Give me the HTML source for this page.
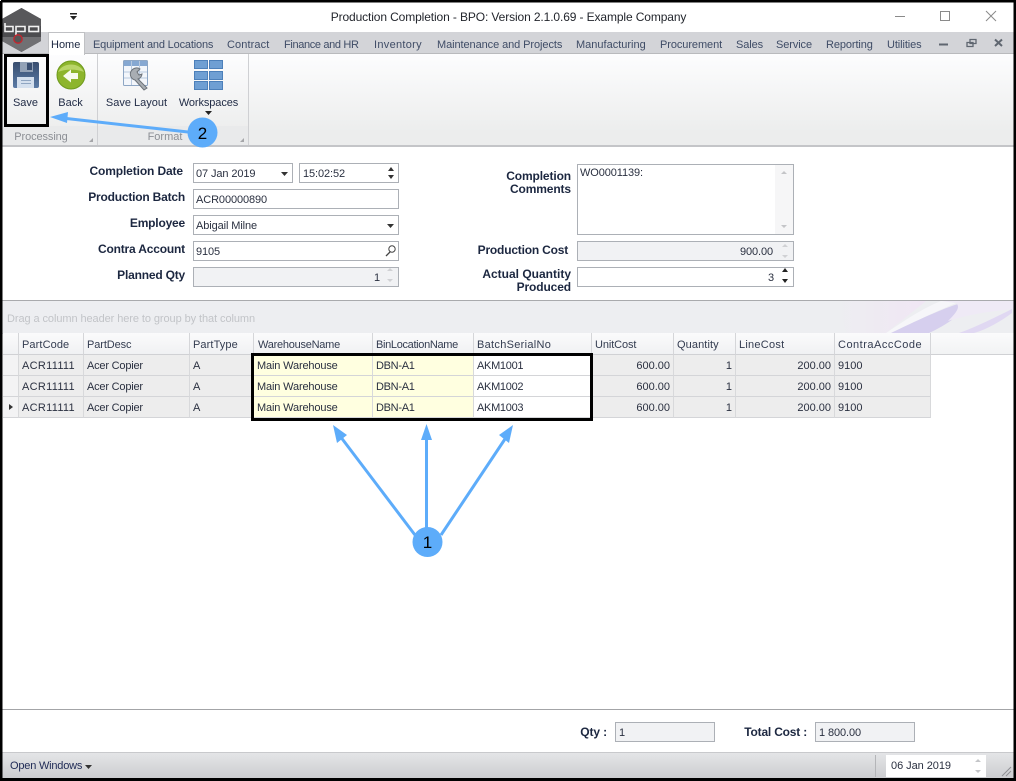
<!DOCTYPE html>
<html><head><meta charset="utf-8"><title>Production Completion</title>
<style>
html,body{margin:0;padding:0;background:#fff}
#p{position:relative;width:1016px;height:781px;overflow:hidden;background:#fff;font:11px/14px "Liberation Sans",sans-serif;color:#1f2a44}
#p div{position:absolute;box-sizing:border-box}
.t{white-space:nowrap}
.r{text-align:right}
.c{text-align:center}
.l{font-weight:bold;text-align:right;white-space:nowrap;color:#1c2740;font-size:12px;letter-spacing:-.12px}
.i{background:#fff;border:1px solid #acb0b6;white-space:nowrap;padding:3px 2px;color:#2a3040;line-height:14px;letter-spacing:-.1px}
.d{background:#f1f2f4}
.tb{top:38px;color:#3f4c66;white-space:nowrap}
.hc{top:333px;height:22px;background:linear-gradient(#fbfbfc,#f0f1f3);border-right:1px solid #d5d6d9;border-bottom:1px solid #d0d1d4;padding:5px 3px 0;color:#333c50;white-space:nowrap}
.cell{height:21px;background:#ededed;border-right:1px solid #d8d9db;border-bottom:1px solid #d4d5d8;padding:4px 3px 0;color:#2a3040;white-space:nowrap}
.y{background:#ffffe0}
.w{background:#fff}
.a{letter-spacing:.3px}.b{letter-spacing:-.2px}.m{letter-spacing:-.15px}.e{letter-spacing:-.3px}
.ind{background:#f3f3f4}
</style></head><body><div id="p">

<!-- ribbon tab strip -->
<div style="left:0;top:32px;width:1016px;height:22px;background:#d3d4d8"></div>
<div style="left:0;top:53px;width:1016px;height:1px;background:#b9babd"></div>
<!-- ribbon body -->
<div style="left:0;top:54px;width:1016px;height:92px;background:linear-gradient(#fdfdfe,#eceded 85%)"></div>
<div style="left:0;top:126px;width:249px;height:20px;background:#e9eaeb"></div>
<div style="left:0;top:145px;width:1016px;height:2px;background:#c4c5c8"></div>
<div style="left:97px;top:54px;width:1px;height:91px;background:#cfd0d3"></div>
<div style="left:248px;top:54px;width:1px;height:91px;background:#cfd0d3"></div>

<!-- Home tab -->
<div style="left:48px;top:32px;width:37px;height:23px;background:#fff;border:1px solid #c0c1c4;border-bottom:0"></div>
<div class="t" style="left:51px;top:38px;color:#1c2740">Home</div>
<div class="tb" style="left:93px;letter-spacing:-.17px">Equipment and Locations</div>
<div class="tb" style="left:227px;letter-spacing:.1px">Contract</div>
<div class="tb" style="left:284px;letter-spacing:-.35px">Finance and HR</div>
<div class="tb" style="left:374px;letter-spacing:.3px">Inventory</div>
<div class="tb" style="left:437px;letter-spacing:-.08px">Maintenance and Projects</div>
<div class="tb" style="left:576px">Manufacturing</div>
<div class="tb" style="left:660px;letter-spacing:-.08px">Procurement</div>
<div class="tb" style="left:736px;letter-spacing:-.1px">Sales</div>
<div class="tb" style="left:776px;letter-spacing:-.1px">Service</div>
<div class="tb" style="left:826px;letter-spacing:-.1px">Reporting</div>
<div class="tb" style="left:887px;letter-spacing:-.1px">Utilities</div>

<!-- title -->
<div class="t c" style="left:0;top:10px;width:1016px;font-size:12px;color:#23262d;letter-spacing:-.115px;padding-left:1px">Production Completion - BPO: Version 2.1.0.69 - Example Company</div>

<!-- ribbon labels -->
<div class="t c" style="left:5px;top:96px;width:41px;color:#1f2a44">Save</div>
<div class="t c" style="left:50px;top:96px;width:41px;color:#1f2a44">Back</div>
<div class="t c" style="left:100px;top:96px;width:73px;color:#1f2a44">Save Layout</div>
<div class="t c" style="left:173px;top:96px;width:71px;color:#1f2a44;letter-spacing:-.1px">Workspaces</div>
<div class="t c" style="left:5px;top:130px;width:72px;color:#8c8f95;letter-spacing:-.1px">Processing</div>
<div class="t c" style="left:130px;top:130px;width:70px;color:#8c8f95">Format</div>

<!-- form left -->
<div class="l" style="left:40px;width:143px;top:164px">Completion Date</div>
<div class="l" style="left:40px;width:145px;top:190px;letter-spacing:-.2px">Production Batch</div>
<div class="l" style="left:40px;width:145px;top:216px;letter-spacing:-.2px">Employee</div>
<div class="l" style="left:40px;width:145px;top:242px;letter-spacing:-.18px">Contra Account</div>
<div class="l" style="left:40px;width:145px;top:268px;letter-spacing:-.2px">Planned Qty</div>

<div class="i" style="left:193px;top:163px;width:100px;height:20px">07 Jan 2019</div>
<div class="i" style="left:299px;top:163px;width:100px;height:20px;padding-left:3px">15:02:52</div>
<div class="i" style="left:193px;top:189px;width:206px;height:20px">ACR00000890</div>
<div class="i" style="left:193px;top:215px;width:206px;height:20px">Abigail Milne</div>
<div class="i" style="left:193px;top:241px;width:206px;height:20px">9105</div>
<div class="i d r" style="left:193px;top:267px;width:206px;height:20px;padding-right:18px">1</div>

<!-- form right -->
<div class="l" style="left:460px;width:111px;top:169px">Completion</div>
<div class="l" style="left:460px;width:111px;top:182px">Comments</div>
<div class="l" style="left:460px;width:108px;top:243px;letter-spacing:-.2px">Production Cost</div>
<div class="l" style="left:460px;width:111px;top:267px;letter-spacing:0">Actual Quantity</div>
<div class="l" style="left:460px;width:111px;top:280px">Produced</div>

<div class="i" style="left:577px;top:164px;width:217px;height:71px;padding-top:1px">WO0001139:</div>
<div style="left:775px;top:165px;width:18px;height:69px;background:#f6f6f7"></div>
<div class="i d r" style="left:577px;top:241px;width:217px;height:20px;padding-right:20px">900.00</div>
<div class="i r" style="left:577px;top:267px;width:217px;height:20px;padding-right:19px">3</div>

<!-- grid group panel -->
<div style="left:2px;top:300px;width:1012px;height:33px;background:#edeef1"></div>
<div style="left:2px;top:300px;width:1012px;height:1px;background:#a9aaad"></div>
<div class="t" style="left:7px;top:312px;color:#c2c4c8;letter-spacing:-.08px">Drag a column header here to group by that column</div>
<svg style="position:absolute;left:816px;top:301px" width="198" height="32" viewBox="0 0 198 32">
<defs><linearGradient id="g1" x1="0" y1="0" x2="1" y2="0"><stop offset="0" stop-color="#edeef1"/><stop offset="1" stop-color="#f0e6f4"/></linearGradient></defs>
<path d="M20 0H110L70 32H30Z" fill="url(#g1)"/>
<path d="M70 32C85 22 105 8 125 0H145C125 8 100 20 75 32Z" fill="#f6f6f9"/>
<path d="M75 32C100 20 125 8 145 2C150 12 130 24 113 32Z" fill="#d6cfee"/>
<path d="M125 0H198V8C175 10 150 14 132 20C140 12 145 6 140 2Z" fill="#efeaf6"/>
<path d="M143 32C160 26 180 16 196 8V12C185 20 172 28 158 32Z" fill="#e0d8f2"/>
</svg>
<div style="left:2px;top:333px;width:1012px;height:1px;background:#d4d5d8"></div>

<!-- grid header -->
<div class="hc" style="left:3px;width:16px"></div>
<div class="hc" style="left:19px;width:65px;letter-spacing:.1px">PartCode</div>
<div class="hc" style="left:84px;width:106px;letter-spacing:-.1px">PartDesc</div>
<div class="hc" style="left:190px;width:64px;letter-spacing:.1px">PartType</div>
<div class="hc" style="left:254px;width:119px;letter-spacing:-.25px;padding-left:4px">WarehouseName</div>
<div class="hc" style="left:373px;width:101px;letter-spacing:-.33px">BinLocationName</div>
<div class="hc" style="left:474px;width:118px;letter-spacing:.3px">BatchSerialNo</div>
<div class="hc" style="left:592px;width:82px;letter-spacing:-.1px">UnitCost</div>
<div class="hc" style="left:674px;width:62px;letter-spacing:.1px">Quantity</div>
<div class="hc" style="left:736px;width:99px;letter-spacing:.25px">LineCost</div>
<div class="hc" style="left:835px;width:96px;letter-spacing:.5px">ContraAccCode</div>
<div style="left:931px;top:333px;width:83px;height:22px;background:linear-gradient(#fbfbfc,#f2f3f4);border-bottom:1px solid #d0d1d4"></div>

<!-- row 1 -->
<div class="cell ind" style="left:3px;top:355px;width:16px"></div>
<div class="cell a" style="left:19px;top:355px;width:65px">ACR11111</div>
<div class="cell b" style="left:84px;top:355px;width:106px">Acer Copier</div>
<div class="cell" style="left:190px;top:355px;width:64px">A</div>
<div class="cell y m" style="left:254px;top:355px;width:119px">Main Warehouse</div>
<div class="cell y e" style="left:373px;top:355px;width:101px">DBN-A1</div>
<div class="cell w e" style="left:474px;top:355px;width:118px">AKM1001</div>
<div class="cell r" style="left:592px;top:355px;width:82px">600.00</div>
<div class="cell r" style="left:674px;top:355px;width:62px">1</div>
<div class="cell r" style="left:736px;top:355px;width:99px">200.00</div>
<div class="cell" style="left:835px;top:355px;width:96px">9100</div>
<!-- row 2 -->
<div class="cell ind" style="left:3px;top:376px;width:16px"></div>
<div class="cell a" style="left:19px;top:376px;width:65px">ACR11111</div>
<div class="cell b" style="left:84px;top:376px;width:106px">Acer Copier</div>
<div class="cell" style="left:190px;top:376px;width:64px">A</div>
<div class="cell y m" style="left:254px;top:376px;width:119px">Main Warehouse</div>
<div class="cell y e" style="left:373px;top:376px;width:101px">DBN-A1</div>
<div class="cell w e" style="left:474px;top:376px;width:118px">AKM1002</div>
<div class="cell r" style="left:592px;top:376px;width:82px">600.00</div>
<div class="cell r" style="left:674px;top:376px;width:62px">1</div>
<div class="cell r" style="left:736px;top:376px;width:99px">200.00</div>
<div class="cell" style="left:835px;top:376px;width:96px">9100</div>
<!-- row 3 -->
<div class="cell ind" style="left:3px;top:397px;width:16px"></div>
<div class="cell a" style="left:19px;top:397px;width:65px">ACR11111</div>
<div class="cell b" style="left:84px;top:397px;width:106px">Acer Copier</div>
<div class="cell" style="left:190px;top:397px;width:64px">A</div>
<div class="cell y m" style="left:254px;top:397px;width:119px">Main Warehouse</div>
<div class="cell y e" style="left:373px;top:397px;width:101px">DBN-A1</div>
<div class="cell w e" style="left:474px;top:397px;width:118px">AKM1003</div>
<div class="cell r" style="left:592px;top:397px;width:82px">600.00</div>
<div class="cell r" style="left:674px;top:397px;width:62px">1</div>
<div class="cell r" style="left:736px;top:397px;width:99px">200.00</div>
<div class="cell" style="left:835px;top:397px;width:96px">9100</div>

<!-- grid bottom line -->
<div style="left:2px;top:709px;width:1012px;height:1px;background:#a3a4a7"></div>

<!-- totals -->
<div class="l" style="left:560px;width:47px;top:725px">Qty :</div>
<div class="i d" style="left:615px;top:722px;width:100px;height:20px;padding-left:3px">1</div>
<div class="l" style="left:720px;width:87px;top:725px;letter-spacing:-.2px">Total Cost :</div>
<div class="i d" style="left:815px;top:722px;width:100px;height:20px;padding-left:3px">1 800.00</div>

<!-- status bar -->
<div style="left:0;top:752px;width:1016px;height:29px;background:linear-gradient(#e4e5e7,#c9cacd);border-top:1px solid #c8c9cc"></div>
<div class="t" style="left:10px;top:759px;color:#1f2a55;font-size:11px;letter-spacing:-.2px">Open Windows</div>
<div style="left:875px;top:755px;width:1px;height:22px;background:#b4b5b8"></div>
<div class="t" style="left:886px;top:755px;width:100px;height:22px;background:#fff;padding:4px 5px;color:#2a3040;line-height:14px;letter-spacing:-.05px">06 Jan 2019</div>

<!-- icons and overlays -->
<svg style="position:absolute;left:0;top:0" width="1016" height="781" viewBox="0 0 1016 781">
<!-- logo -->
<path d="M21.500 8L41 19V41L21.500 52L2 41V19Z" fill="#4c4c4f"/>
<path d="M21.500 8L41 19V26H2V19Z" fill="#58585b"/>
<path d="M2 37H41V41L21.500 52L2 41Z" fill="#707073"/>
<g fill="none" stroke="#f2f2f2" stroke-width="1.600"><path d="M5 23V31.500H13V26.500H5"/><path d="M16 35V26.500H25V31.500H16"/><rect x="29" y="26.500" width="9.500" height="5"/></g>
<circle cx="18" cy="39" r="4.200" fill="#555" stroke="#c8242c" stroke-width="1.300"/>
<!-- qat arrow -->
<path d="M70 13h7v1.500h-7z M70 16h7l-3.500 4z" fill="#222"/>
<!-- window controls -->
<path d="M895 16.500H905" stroke="#8a8a8a"/>
<rect x="940.500" y="11.500" width="9" height="9" fill="none" stroke="#8a8a8a"/>
<path d="M986 11L996 21M996 11L986 21" stroke="#8a8a8a"/>
<path d="M939 44.500H948" stroke="#5f6670" stroke-width="2"/>
<path d="M970 39.500h6v4h-6zM967 42.500h6v4h-6z" fill="#d3d4d8" stroke="#5f6670" stroke-width="1.300"/>
<path d="M995 39.500L1002 46M1002 39.500L995 46" stroke="#5f6670" stroke-width="2"/>
<!-- save icon -->
<defs><linearGradient id="sv" x1="0" y1="0" x2="0" y2="1"><stop offset="0" stop-color="#384d6e"/><stop offset="1" stop-color="#5a7ba6"/></linearGradient></defs>
<rect x="13" y="62" width="26" height="26" rx="2" fill="url(#sv)"/>
<rect x="20" y="62" width="13" height="10" fill="#93a2b6"/>
<rect x="27" y="63" width="5" height="7" fill="#3a4f70"/>
<rect x="17" y="77" width="17" height="11" fill="#d4e0ee"/>
<path d="M21 80.500H31M21 83.500H31" stroke="#8fa6c2"/>
<!-- back icon -->
<circle cx="71" cy="75" r="14" fill="#8db52c" stroke="#6e9a1c"/>
<path d="M58 72a14 12 0 0 1 26 0a20 10 0 0 0-26 0Z" fill="#b9d568"/>
<path d="M63 76L71 69.500V73H78V79H71V82.500Z" fill="#f7fbee"/>
<!-- save layout icon -->
<rect x="123.500" y="60.500" width="24" height="25" rx="1" fill="#f3f6fb" stroke="#8ea6c4"/>
<rect x="124" y="61" width="23" height="5" fill="#86a8d2"/>
<path d="M124 72H147M124 78H147M131.500 61V85M139.500 61V85" stroke="#b8c9df"/>
<path d="M132 70a6 6 0 0 1 8 -1l-3 3 2 3 3-1a6 6 0 0 1-4 5l9 9-3 2-9-10a6 6 0 0 1-3-10Z" fill="#a8adb3" stroke="#6c7279"/>
<!-- workspaces icon -->
<g fill="#6f9fd3" stroke="#4d80ba"><rect x="194.500" y="60.500" width="13" height="8"/><rect x="209.500" y="60.500" width="13" height="8"/><rect x="194.500" y="71.500" width="13" height="8"/><rect x="209.500" y="71.500" width="13" height="8"/><rect x="194.500" y="81.500" width="13" height="8"/><rect x="209.500" y="81.500" width="13" height="8"/></g>
<path d="M205 111h7l-3.500 4z" fill="#222"/>
<!-- ribbon launchers -->
<path d="M93 138v4h-4z" fill="#a5a6a9"/><path d="M244 138v4h-4z" fill="#a5a6a9"/>
<!-- combo arrows -->
<path d="M281 172h7l-3.500 4z" fill="#333"/>
<path d="M387 224h7l-3.500 4z" fill="#333"/>
<path d="M388 171l3-4 3 4zM388 175h6l-3 4z" fill="#333"/>
<path d="M782 272l3-4 3 4zM782 279h6l-3 4z" fill="#222"/>
<path d="M387 271l3-3 3 3zM387 279h6l-3 3z" fill="#d0d1d4"/>
<path d="M782 247l3-3 3 3zM782 255h6l-3 3z" fill="#d0d1d4"/>
<path d="M781 174l3-3 3 3zM781 225h6l-3 3z" fill="#c4c5c8"/>
<path d="M975 762l3-3 3 3zM975 770h6l-3 3z" fill="#c4c5c8"/>
<!-- search -->
<circle cx="392" cy="249" r="3.200" fill="none" stroke="#444"/><path d="M390 252L386 256" stroke="#444" stroke-width="1.300"/>
<!-- row indicator -->
<path d="M9 404v6l4-3z" fill="#333"/>
<!-- open windows arrow -->
<path d="M85 765h7l-3.500 4z" fill="#333"/>
<!-- size grip -->
<path d="M1002 776L1011 767M1006 776L1011 771" stroke="#8f9094"/>
<!-- black highlights -->
<rect x="5.500" y="55.500" width="42" height="70" fill="none" stroke="#000" stroke-width="3"/>
<rect x="252.500" y="354.500" width="339" height="65" fill="none" stroke="#000" stroke-width="3"/>
<!-- window border -->
<path d="M1 1H1015V779.500H1V1" fill="none" stroke="#000" stroke-width="3"/>
<!-- arrows -->
<g stroke="#5dacfa" stroke-width="3" fill="none">
<path d="M197 133L62 118"/>
<path d="M415 535L340 436"/>
<path d="M426.500 530V432"/>
<path d="M441 535L507 436"/>
</g>
<g fill="#5dacfa">
<path d="M50 117L68 112L67 123Z"/>
<path d="M333 425L347 435L337 443Z"/>
<path d="M426.500 424L432 440H421Z"/>
<path d="M513 425L509 443L499 435Z"/>
<circle cx="202.500" cy="132.500" r="15"/>
<circle cx="427.500" cy="542" r="15"/>
</g>
<text x="202.500" y="139" font-family="Liberation Sans,sans-serif" font-size="17" text-anchor="middle" fill="#000">2</text>
<text x="427.500" y="548" font-family="Liberation Sans,sans-serif" font-size="17" text-anchor="middle" fill="#000">1</text>
</svg>
</div></body></html>
